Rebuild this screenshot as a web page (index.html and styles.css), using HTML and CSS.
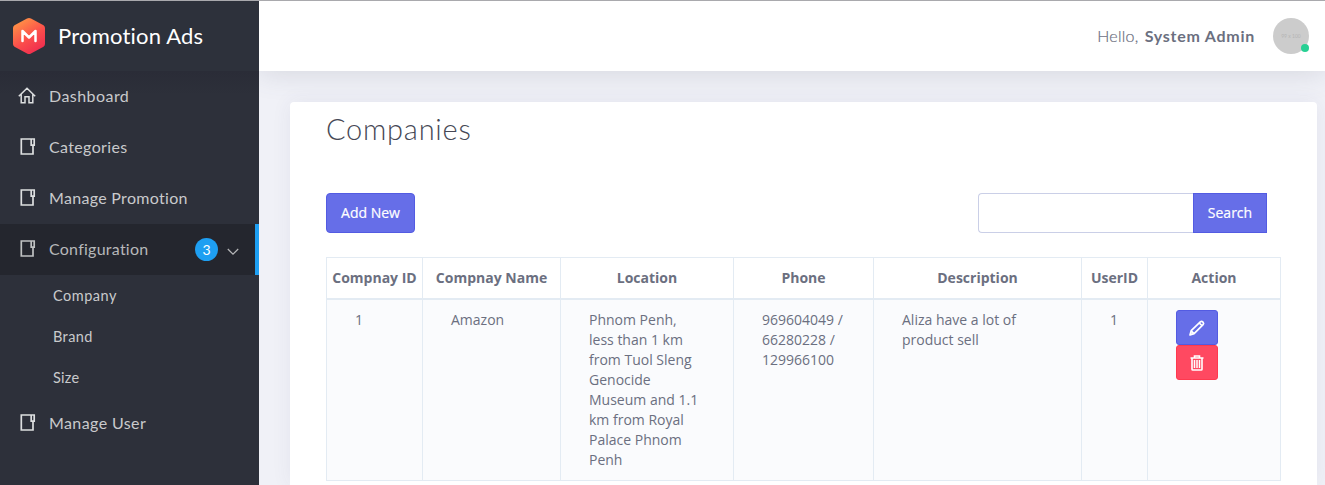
FILE: index.html
```html
<!DOCTYPE html>
<html lang="en">
<head>
<meta charset="utf-8">
<title>Companies</title>
<link rel="stylesheet" href="styles.css">
</head>
<body>
<svg class="defs" width="0" height="0">
  <symbol id="notebook" viewBox="0 0 16 18">
    <path d="M13 8V16H1.300V1H14.200V7.200H11.200V1" fill="none" stroke="currentColor" stroke-width="1.700"/>
  </symbol>
</svg>
<div class="app">
  <aside class="sidebar">
    <div class="brand">
      <svg class="logo" width="34" height="38" viewBox="0 0 34 38">
        <defs><linearGradient id="lg" x1="0.2" y1="0" x2="0.8" y2="1"><stop offset="0.05" stop-color="#ff9146"/><stop offset="0.55" stop-color="#fb4d4b"/><stop offset="1" stop-color="#ee2950"/></linearGradient></defs>
        <path d="M15 1.600Q17 .500 19 1.600L31.500 8.300Q33 9.200 33 11V27Q33 28.800 31.500 29.700L19 36.400Q17 37.500 15 36.400L2.500 29.700Q1 28.800 1 27V11Q1 9.200 2.500 8.300Z" fill="url(#lg)"/>
        <path d="M10.500 24V14L17 20.500L23.500 14V24" fill="none" stroke="#fff" stroke-width="2.500" stroke-linecap="round" stroke-linejoin="round"/>
      </svg>
      <span class="brand-name">Promotion Ads</span>
    </div>
    <nav class="menu">
      <a class="item"><svg class="icon home" width="18" height="18" viewBox="0 0 18 18"><path d="M.8 9.300L9 1.300L17.200 9.300M3.200 7.500V15.800H7V9.800H11V15.800H14.800V7.500" fill="none" stroke="currentColor" stroke-width="1.500"/></svg><span class="label t-dashboard">Dashboard</span></a>
      <a class="item"><svg class="icon book" width="16" height="18"><use href="#notebook"/></svg><span class="label t-categories">Categories</span></a>
      <a class="item"><svg class="icon book" width="16" height="18"><use href="#notebook"/></svg><span class="label t-promotion">Manage Promotion</span></a>
      <a class="item active"><svg class="icon book" width="16" height="18"><use href="#notebook"/></svg><span class="label t-config">Configuration</span><span class="badge">3</span><svg class="chevron" width="12" height="8" viewBox="0 0 12 8"><path d="M.8 1L6 6.200L11.200 1" fill="none" stroke="currentColor" stroke-width="1.200"/></svg></a>
      <div class="submenu">
        <a class="sub t-company">Company</a>
        <a class="sub t-brand">Brand</a>
        <a class="sub t-size">Size</a>
      </div>
      <a class="item"><svg class="icon book" width="16" height="18"><use href="#notebook"/></svg><span class="label t-user">Manage User</span></a>
    </nav>
  </aside>
  <div class="main">
    <header class="topbar">
      <span class="hello">Hello,</span><strong class="username">System Admin</strong>
      <div class="avatar"><span class="avatar-text">99 x 100</span><i class="online"></i></div>
    </header>
    <main class="card">
      <h1 class="title">Companies</h1>
      <div class="tools">
        <button class="btn add">Add New</button>
        <div class="search"><input class="field" type="text" aria-label="Search"><button class="btn go">Search</button></div>
      </div>
      <table class="grid">
        <colgroup><col class="c1"><col class="c2"><col class="c3"><col class="c4"><col class="c5"><col class="c6"><col class="c7"></colgroup>
        <thead><tr><th>Compnay ID</th><th>Compnay Name</th><th>Location</th><th>Phone</th><th>Description</th><th>UserID</th><th>Action</th></tr></thead>
        <tbody><tr>
          <td>1</td><td>Amazon</td>
          <td>Phnom Penh,<br>less than 1 km<br>from Tuol Sleng<br>Genocide<br>Museum and 1.1<br>km from Royal<br>Palace Phnom<br>Penh</td>
          <td>969604049 /<br>66280228 /<br>129966100</td>
          <td>Aliza have a lot of<br>product sell</td>
          <td>1</td>
          <td><div class="actions">
            <button class="act edit"><svg width="18" height="18" viewBox="0 0 18 18"><path d="M2 15.900L3.200 11.700L12.300 2.900Q13.600 1.900 15 3.100Q16.200 4.500 15.100 5.700L6.100 14.600ZM3.200 11.900L6 14.600M11.300 4L14 6.700" fill="none" stroke="#fff" stroke-width="1.700" stroke-linejoin="round"/></svg></button>
            <button class="act del"><svg width="16" height="18" viewBox="0 0 16 18"><path d="M1.500 4H14.500M5.500 3.700V2H10.500V3.700M3 4V15.200Q3 16 3.800 16H12.200Q13 16 13 15.200V4" fill="none" stroke="#fff" stroke-width="1.600"/><path d="M5.500 6V14M8 6V14M10.500 6V14" stroke="#fff" stroke-width="1.500"/></svg></button>
          </div></td>
        </tr></tbody>
      </table>
    </main>
  </div>
</div>
</body>
</html>
```
FILE: styles.css
```css
* { box-sizing: border-box; }
body { margin: 0; height: 485px; overflow: hidden; background: #f0f1f7; font: 14px/20px "Open Sans", sans-serif; color: #6b6f80; }
.defs { display: block; height: 0; }
.app { display: flex; height: 485px; border-top: 1px solid #a9a9ad; }
.sidebar { width: 259px; flex: none; background: #2d303a; font-family: Lato, sans-serif; }
.brand { height: 70px; padding: 0 0 0 12px; display: flex; align-items: center; background: #2d313b; }
.brand-name { margin-left: 12px; font-size: 22px; color: #fff; letter-spacing: .2px; white-space: nowrap; }
.menu { background: linear-gradient(#2a2c37, #2d303a 24px); }
.item { display: flex; align-items: center; height: 51px; padding-left: 18px; font-size: 16px; color: #c9cacc; white-space: nowrap; }
.label { margin-bottom: 2px; }
.t-dashboard { letter-spacing: .45px; }
.t-categories { letter-spacing: .36px; }
.t-promotion { letter-spacing: .31px; }
.t-config { letter-spacing: .25px; }
.t-user { letter-spacing: .4px; }
.icon { flex: none; width: 18px; margin-right: 13px; color: #dddfe0; }
.icon.home { margin-bottom: 2px; }
.icon.book { width: 16px; margin: 0 13px 1px 2px; }
.active { background: #24262e; border-right: 4px solid #1e9ff2; padding-right: 16px; color: #b7b8ba; }
.active .icon { color: #bfc1c2; }
.badge { margin: 0 0 1px auto; width: 23px; height: 23px; border-radius: 50%; background: #1e9ff2; color: #fff; font-size: 14px; line-height: 23px; text-align: center; }
.chevron { margin: 5px 0 0 9px; }
.submenu { height: 123px; padding-left: 53px; }
.sub { display: block; height: 41px; line-height: 41px; font-size: 14.5px; color: #c9cacc; width: max-content; }
.t-company { letter-spacing: .5px; }
.t-brand { letter-spacing: .4px; }
.t-size { letter-spacing: .25px; }
.main { flex: 1; min-width: 0; }
.topbar { position: relative; height: 70px; background: #fff; display: flex; align-items: center; justify-content: flex-end; padding-right: 16px; font: 16px/24px Lato, sans-serif; color: #6b6f80; box-shadow: 0 0 30px rgba(85, 90, 110, .2); clip-path: inset(0 0 -40px 0); }
.hello { font-weight: 300; letter-spacing: .3px; -webkit-text-stroke: .2px #6b6f80; }
.username { margin-left: 6px; font-weight: 700; letter-spacing: .75px; }
.avatar { position: relative; width: 36px; height: 36px; margin-left: 18px; border-radius: 50%; background: #ccc; display: flex; align-items: center; justify-content: center; }
.avatar-text { font-size: 5px; color: #b5b5b5; }
.online { position: absolute; right: 0; bottom: 2px; width: 8px; height: 8px; border-radius: 50%; background: #28d094; }
.card { position: relative; margin: 31px 8px 0 31px; height: 383px; padding: 9px 36px 0; background: #fff; border-radius: 4px 4px 0 0; box-shadow: 0 0 20px rgba(62, 57, 107, .07); }
.title { margin: 0; font: 300 29px/36px Lato, sans-serif; letter-spacing: .75px; color: #464855; width: max-content; }
.tools { display: flex; justify-content: space-between; margin-top: 46px; padding-right: 14px; }
.btn { height: 40px; border: 1px solid #535be2; background: #666ee8; color: #fff; font: 14px/20px "Open Sans", sans-serif; padding: 0; -webkit-text-stroke: .2px #fff; }
.add { width: 89px; border-radius: 4px; }
.search { display: flex; }
.field { width: 215px; height: 40px; border: 1px solid #cacfe7; border-right: 0; border-radius: 4px 0 0 4px; padding: 8px; background: #fff; }
.go { width: 74px; }
.grid { width: 955px; margin-top: 24px; table-layout: fixed; border-collapse: separate; border-spacing: 0; border: 0 solid #e3ebf3; border-width: 1px 0 0 1px; }
.c1 { width: 96px; } .c2 { width: 138px; } .c3 { width: 173px; } .c4 { width: 140px; } .c5 { width: 208px; } .c6 { width: 66px; } .c7 { width: 133px; }
.grid th { height: 42px; padding: 0; border-right: 1px solid #e3ebf3; border-bottom: 2px solid #e3ebf3; white-space: nowrap; font-weight: 700; }
.grid td { height: 181px; padding: 10px 0 10px 28px; vertical-align: top; border-right: 1px solid #e3ebf3; border-bottom: 1px solid #e3ebf3; background: #fafbfd; white-space: nowrap; }
.actions { display: flex; flex-direction: column; }
.act { width: 42px; height: 35px; display: flex; align-items: center; justify-content: center; border: 1px solid #535be2; border-radius: 3px; background: #666ee8; padding: 0; }
.act.del { border-color: #ff394f; background: #ff4961; }
```
